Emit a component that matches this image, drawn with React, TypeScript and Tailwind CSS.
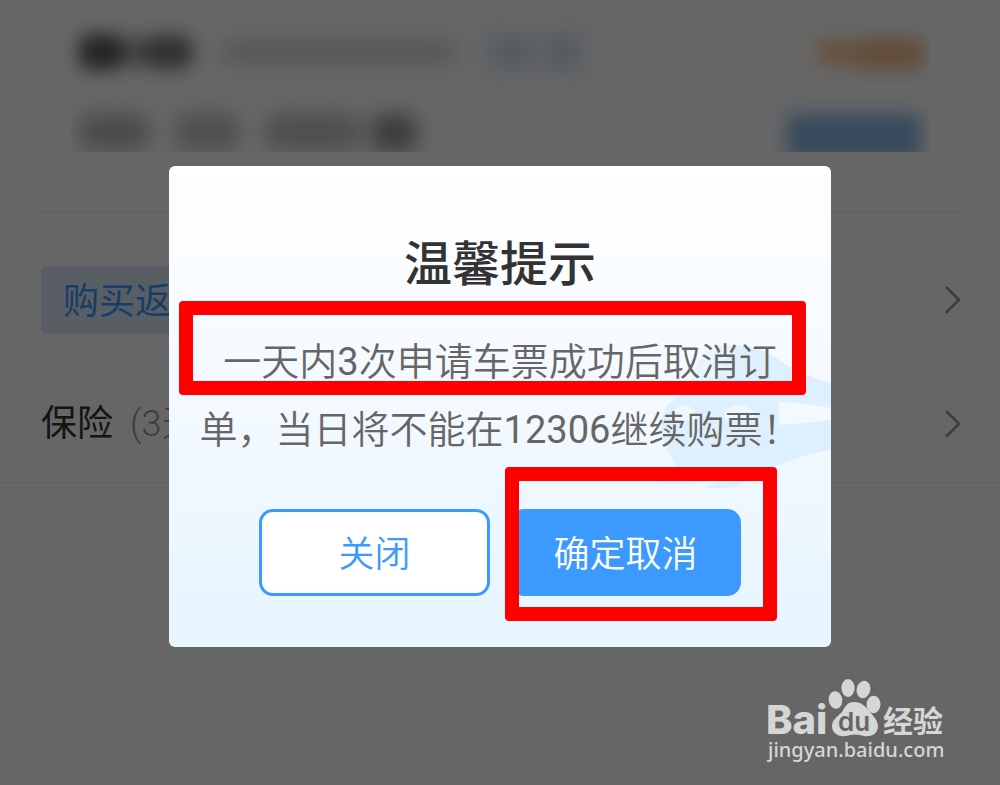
const rowText = "text-[36px] leading-[48px]";

function Chevron() {
  return (
    <svg width="16" height="28" viewBox="0 0 16 28" fill="none" stroke="#999999" strokeWidth="2.6" strokeLinecap="round" strokeLinejoin="round" aria-hidden="true">
      <path d="M1.8 1.8 14 13.8 1.8 26" />
    </svg>
  );
}

function Mascot() {
  return (
    <svg className="absolute right-0 top-[174px]" width="180" height="150" viewBox="0 0 180 150" aria-hidden="true">
      <path
        fill="#def0fe"
        d="M54 12C72 1 104 4 124 17C142 30 160 38 180 43V68C164 65 146 62 128 62V85C146 84 164 82 180 80V109C156 115 136 121 114 129L100 137Q88 148 73 148H54L76 137C60 139 50 142 36 144H4L28 136C24 118 12 108 10 90C8 70 24 52 40 50C42 32 46 20 54 12Z"
      />
      <path fill="#f0f8ff" d="M20 76Q31 56 44 72V80H18ZM74 72Q90 57 104 74V80H74Z" />
      <path fill="#eff8ff" d="M54 12Q68 2 82 4L66 42H40Q44 22 54 12Z" opacity="0.6" />
    </svg>
  );
}

function Watermark() {
  return (
    <div className="absolute bottom-[22px] right-[54px] text-[#d6d6d6]">
      <svg className="block overflow-visible" width="178" height="58" viewBox="0 0 178 58" fill="currentColor" role="img" aria-label="Baidu 经验">
        <text x="-2" y="55" fontFamily="Inter, sans-serif" fontWeight="800" fontSize="40">Bai</text>
        <ellipse cx="67.5" cy="21" rx="6.8" ry="8.8" transform="rotate(-8 67.5 21)" />
        <ellipse cx="80" cy="9" rx="6.6" ry="9" />
        <ellipse cx="95.5" cy="10.5" rx="6.8" ry="8.8" transform="rotate(14 95.5 10.5)" />
        <ellipse cx="105.5" cy="25.5" rx="7" ry="8.8" transform="rotate(4 105.5 25.5)" />
        <path d="M86 23C94 23 98 28 102 33C107 39 110 42 110 48C109 56 102 58 96 57Q87 54 78 57C70 58 64 54 64 47C64 41 69 38 74 33C77 28 79 23 86 23Z" />
        <text x="70" y="52" fill="#666666" fontFamily="Inter, sans-serif" fontWeight="600" fontSize="26">du</text>
        <text x="115" y="53" fontFamily="'Noto Sans CJK SC', sans-serif" fontWeight="700" fontSize="30">经验</text>
      </svg>
      <div className="font-['Noto_Sans',sans-serif] text-[20px] leading-[26px] font-medium">jingyan.baidu.com</div>
    </div>
  );
}

export default function App() {
  return (
    <div className="relative min-h-screen overflow-hidden bg-white font-[Roboto,'Noto_Sans_CJK_SC',sans-serif]">
      <main>
        <section className="mx-[40px] h-[213px] border-x border-b-2 border-[#f6f6f6] px-[38px] pt-[28px]">
          <div className="flex h-[48px] items-center" aria-hidden="true">
            <div className="flex w-[118px] items-center blur-[9px]">
              <div className="h-[36px] w-[44px] rounded-xl bg-[#333] opacity-80" />
              <div className="h-[30px] w-[20px] bg-[#555] opacity-50" />
              <div className="h-[34px] w-[50px] rounded-xl bg-[#444] opacity-70" />
            </div>
            <div className="ml-[24px] h-[26px] w-[236px] rounded-xl bg-[#bbb] opacity-50 blur-[10px]" />
            <div className="ml-[22px] flex h-[54px] w-[112px] items-center gap-[18px] rounded-xl bg-[#eff5fb] px-[16px] blur-[9px]">
              <div className="h-[24px] w-[38px] rounded-xl bg-[#d4e1f0]" />
              <div className="h-[28px] w-[30px] rounded-xl bg-[#d4e1f0]" />
            </div>
            <div className="ml-auto mr-[-8px] h-[64px] w-[134px] overflow-hidden">
              <div className="ml-[22px] mt-[18px] flex h-[30px] w-[116px] blur-[9px]">
                <div className="h-[28px] w-[34px] rounded-xl bg-[#ff9c40] opacity-50" />
                <div className="h-[32px] w-[74px] rounded-xl bg-[#f08020] opacity-50" />
              </div>
            </div>
          </div>
          <div className="mx-[-8px] mt-[16px] flex h-[60px] overflow-hidden px-[8px] pt-[22px]" aria-hidden="true">
            <div className="h-[36px] w-[70px] rounded-xl bg-[#777] opacity-50 blur-[10px]" />
            <div className="ml-[26px] h-[36px] w-[64px] rounded-xl bg-[#888] opacity-50 blur-[10px]" />
            <div className="ml-[26px] h-[36px] w-[96px] rounded-xl bg-[#888] opacity-50 blur-[10px]" />
            <div className="ml-[10px] h-[38px] w-[46px] rounded-xl bg-[#555] opacity-60 blur-[10px]" />
            <div className="ml-auto h-[46px] w-[134px] bg-[#8fb8e6] blur-[9px]" />
          </div>
        </section>
        <div className="flex h-[148px] items-center justify-between border-b-2 border-[#f4f4f4] pl-[41px] pr-[39px] pt-[27px]">
          <span className={`inline-block rounded-md bg-[#dcecfa] px-[22px] pb-[8px] pt-[12px] text-[#3c9afe] ${rowText}`}>购买返</span>
          <Chevron />
        </div>
        <div className="flex h-[123px] items-center justify-between border-b-2 border-[#f4f4f4] pl-[41px] pr-[39px] pt-[4px]">
          <span className={`text-[#333] ${rowText}`}>
            保险 <span className="ml-2 font-light text-[#999]">(3天</span>
          </span>
          <Chevron />
        </div>
      </main>

      <div className="absolute inset-0 flex items-start justify-center bg-black/60 pt-[166px]">
        <div role="dialog" aria-modal="true" aria-labelledby="tip-title" className="relative w-[662px] max-w-full overflow-hidden rounded-md bg-linear-to-b from-white via-[#f3f9ff] to-[#e6f5ff] pb-[51px] pt-[67px]">
          <Mascot />
          <h1 id="tip-title" className="relative text-center text-[48px] font-medium leading-[64px] text-[#333]">温馨提示</h1>
          <p className="relative mt-[31px] text-center text-[38px] font-[350] leading-[68px] text-[#666]">
            一天内<span className="font-normal">3</span>次申请车票成功后取消订
            <br />
            单，当日将不能在<span className="font-normal">12306</span>继续购票！
          </p>
          <div className="relative mt-[45px] flex justify-center gap-[20px] text-[36px] font-[350]">
            <button type="button" className="h-[87px] w-[231px] rounded-[14px] border-3 border-[#3c9afe] bg-white pt-1 text-[#3c9afe]">关闭</button>
            <button type="button" className="h-[87px] w-[231px] rounded-[14px] bg-[#3c9afe] pt-1 text-white">确定取消</button>
          </div>
          <div className="absolute left-[10px] top-[135px] h-[94px] w-[627px] rounded border-[14px] border-[#ff0000]" />
          <div className="absolute left-[336px] top-[301px] h-[154px] w-[272px] rounded border-[14px] border-[#ff0000]" />
        </div>
        <Watermark />
      </div>
    </div>
  );
}
